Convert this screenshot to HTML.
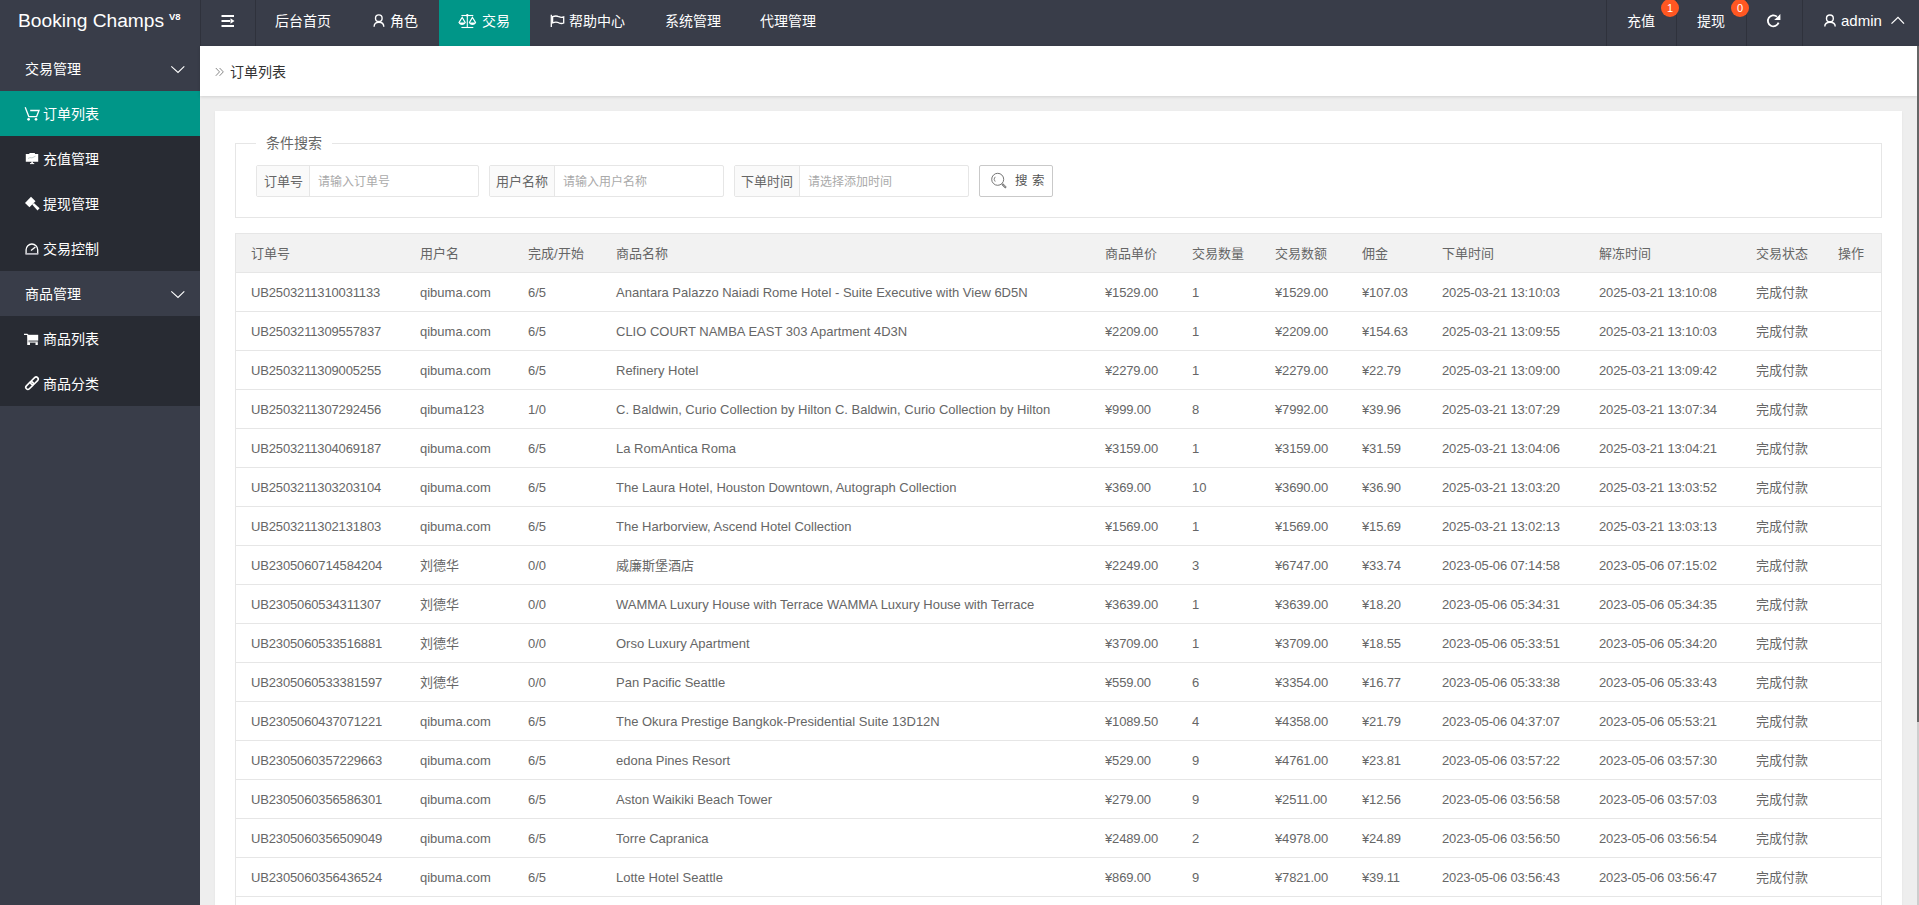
<!DOCTYPE html>
<html lang="zh-CN">
<head>
<meta charset="utf-8">
<title>订单列表</title>
<style>
*{margin:0;padding:0;box-sizing:border-box;}
html,body{width:1919px;height:905px;overflow:hidden;}
body{position:relative;background:#eeeeee;font-family:"Liberation Sans",sans-serif;color:#666;font-size:14px;}
.abs{position:absolute;}
/* header */
.header{position:absolute;left:0;top:0;width:1919px;height:46px;background:#393D49;}
.header .sep{position:absolute;top:0;width:1px;height:46px;background:#2f323c;}
.logo{position:absolute;left:18px;top:10px;color:#fff;font-size:19.2px;line-height:22px;white-space:nowrap;}
.logo sup{font-size:9.5px;position:absolute;left:151px;top:2px;line-height:10px;font-weight:bold;}
.nav{position:absolute;top:0;height:46px;line-height:42px;color:#fff;font-size:14px;white-space:nowrap;}
.nav.active{background:#009688;}
.badge{position:absolute;top:-1px;width:18px;height:18px;border-radius:9px;background:#FF5722;color:#fff;font-size:11px;line-height:18px;text-align:center;}
/* sidebar */
.side{position:absolute;left:0;top:46px;width:200px;height:859px;background:#393D49;}
.mi{position:absolute;left:0;width:200px;height:45px;line-height:45px;color:#fff;font-size:14px;white-space:nowrap;}
.mi.dd{background:#282B33;}
.mi.on{background:#009688;}
.mi .t{position:absolute;left:25px;top:1px;}
.mi .ico{position:absolute;}
/* breadcrumb */
.crumb{position:absolute;left:200px;top:46px;width:1717px;height:50px;background:#fff;box-shadow:0 1px 3px rgba(0,0,0,.12);}
.crumb .t{position:absolute;left:30px;top:15px;color:#333;font-size:14px;}
/* scrollbar */
.sbar{position:absolute;left:1917px;top:46px;width:2px;height:859px;background:#cdcdcd;}
.sthumb{position:absolute;left:1917px;top:46px;width:2px;height:676px;background:#666;}
/* card */
.card{position:absolute;left:215px;top:111px;width:1687px;height:794px;background:#fff;box-shadow:0 1px 2px 0 rgba(0,0,0,.06);}
.fs{position:absolute;left:235px;top:143px;width:1647px;height:75px;border:1px solid #e6e6e6;}
.legend{position:absolute;left:256px;top:133px;background:#fff;padding:0 10px;color:#666;font-size:14px;line-height:20px;}
.ig{position:absolute;top:165px;height:32px;border:1px solid #e6e6e6;border-radius:2px;background:#fff;}
.ig .lab{position:absolute;left:0;top:0;height:30px;background:#fafafa;border-right:1px solid #e6e6e6;color:#666;font-size:13px;line-height:32px;text-align:center;}
.ig .ph{position:absolute;top:0;line-height:32px;color:#aaa;font-size:12px;white-space:nowrap;}
.btn{position:absolute;left:979px;top:165px;width:74px;height:32px;border:1px solid #c9c9c9;border-radius:2px;background:#fff;color:#555;font-size:13px;line-height:30px;}
/* table */
.table{position:absolute;left:235px;top:233px;width:1647px;height:672px;border-left:1px solid #e6e6e6;border-right:1px solid #e6e6e6;border-top:1px solid #e6e6e6;overflow:hidden;}
.thead{position:absolute;left:0;top:0;width:100%;height:39px;background:#f2f2f2;border-bottom:1px solid #e6e6e6;}
.tr{position:absolute;left:0;width:100%;height:39px;border-bottom:1px solid #e6e6e6;background:#fff;}
.c{position:absolute;top:1px;line-height:38px;font-size:13px;color:#666;white-space:nowrap;}
.c.n{letter-spacing:-0.15px;}
</style>
</head>
<body>
<!-- header -->
<div class="header">
  <div class="logo">Booking Champs<sup>V8</sup></div>
  <div class="sep" style="left:200px"></div>
  <div class="sep" style="left:255px"></div>
  <svg class="abs" style="left:215px;top:8px" width="25" height="25" viewBox="0 0 25 25"><g fill="#fff"><rect x="6.5" y="7" width="12.5" height="2"/><rect x="6.5" y="12" width="8.5" height="2"/><rect x="6.5" y="17" width="12.5" height="2"/><path d="M15.5 10.2 L19.5 13 L15.5 15.8 Z"/></g></svg>
  <div class="nav" style="left:275px;">后台首页</div>
  <svg class="abs" style="left:365px;top:8px" width="25" height="25" viewBox="0 0 25 25"><g fill="none" stroke="#fff" stroke-width="1.4"><circle cx="13.8" cy="10.2" r="3.3"/><path d="M9.1 18.8 C9.1 15.6 11 14.2 13.9 14.2 C16.8 14.2 18.8 15.6 18.8 18.8"/></g></svg>
  <div class="nav" style="left:390px;">角色</div>
  <div class="nav active" style="left:439px;width:91px;"></div>
  <svg class="abs" style="left:452px;top:8px" width="30" height="25" viewBox="0 0 30 25"><g fill="none" stroke="#fff" stroke-width="1.1"><path d="M9.4 7.5 H21.3"/><path d="M15.3 7.5 V19.5"/><path d="M9.4 19.5 H21.3"/><path d="M6.8 14.9 L10.2 9.4 L13.4 14.9"/><path d="M17.2 14.9 L20.4 9.4 L23.8 14.9"/></g><circle cx="15.3" cy="7.2" r="1.2" fill="#fff"/><path d="M6.6 14.6 H13.6 C13.3 16.2 12 17 10.1 17 C8.2 17 6.9 16.2 6.6 14.6 Z" fill="#fff"/><path d="M17 14.6 H24 C23.7 16.2 22.4 17 20.5 17 C18.6 17 17.3 16.2 17 14.6 Z" fill="#fff"/></svg>
  <div class="nav" style="left:482px;">交易</div>
  <svg class="abs" style="left:543px;top:8px" width="25" height="25" viewBox="0 0 25 25"><g fill="none" stroke="#fff" stroke-width="1.3"><path d="M8.3 6.8 V19"/><path d="M9.6 8.7 C12 7.7 14.3 7.9 15.8 8.7 C17.4 9.5 19.4 9.5 20.7 8.9 V15 C19.4 15.6 17.4 15.6 15.8 14.8 C14.3 14 12 13.9 9.6 14.8 Z"/></g></svg>
  <div class="nav" style="left:569px;">帮助中心</div>
  <div class="nav" style="left:665px;">系统管理</div>
  <div class="nav" style="left:760px;">代理管理</div>

  <div class="sep" style="left:1606px"></div>
  <div class="sep" style="left:1676px"></div>
  <div class="sep" style="left:1746px"></div>
  <div class="sep" style="left:1802px"></div>
  <div class="nav" style="left:1627px;">充值</div>
  <div class="badge" style="left:1661px;">1</div>
  <div class="nav" style="left:1697px;">提现</div>
  <div class="badge" style="left:1731px;">0</div>
  <svg class="abs" style="left:1760px;top:8px" width="25" height="25" viewBox="0 0 25 25"><path d="M17 8.65 A5.5 5.5 0 1 0 18.58 14.65" fill="none" stroke="#fff" stroke-width="1.8"/><path d="M14.2 12 L20.4 6 V12 Z" fill="#fff"/></svg>
  <svg class="abs" style="left:1815px;top:8px" width="25" height="25" viewBox="0 0 25 25"><g fill="none" stroke="#fff" stroke-width="1.4"><circle cx="14.9" cy="10.4" r="3.4"/><path d="M9.8 18.6 C9.8 15.6 11.9 14.3 15 14.3 C18.1 14.3 20.2 15.6 20.2 18.6"/></g></svg>
  <div class="nav" style="left:1841px;font-size:15px;">admin</div>
  <svg class="abs" style="left:1885px;top:12px" width="25" height="16" viewBox="0 0 25 16"><path d="M6.5 11.6 L13 5.4 L19 11.6" fill="none" stroke="#fff" stroke-width="1.3"/></svg>
</div>

<!-- sidebar -->
<div class="side">
  <div class="mi" style="top:0;"><span class="t">交易管理</span></div>
  <div class="mi on" style="top:45px;"><span class="t" style="left:43px">订单列表</span></div>
  <div class="mi dd" style="top:90px;"><span class="t" style="left:43px">充值管理</span></div>
  <div class="mi dd" style="top:135px;"><span class="t" style="left:43px">提现管理</span></div>
  <div class="mi dd" style="top:180px;"><span class="t" style="left:43px">交易控制</span></div>
  <div class="mi" style="top:225px;"><span class="t">商品管理</span></div>
  <div class="mi dd" style="top:270px;"><span class="t" style="left:43px">商品列表</span></div>
  <div class="mi dd" style="top:315px;"><span class="t" style="left:43px">商品分类</span></div>
</div>
<!-- sidebar icons (page coords) -->
<svg class="abs" style="left:160px;top:55px" width="35" height="25" viewBox="0 0 35 25"><path d="M11.3 11.3 L18 17.4 L24.3 11.3" fill="none" stroke="#fff" stroke-width="1.1"/></svg>
<svg class="abs" style="left:160px;top:280px" width="35" height="25" viewBox="0 0 35 25"><path d="M11.3 11.3 L18 17.4 L24.3 11.3" fill="none" stroke="#fff" stroke-width="1.1"/></svg>
<svg class="abs" style="left:20px;top:100px" width="25" height="25" viewBox="0 0 25 25"><g fill="none" stroke="#fff" stroke-width="1.3"><path d="M5.2 7.2 L8.8 16.6 H16.6 L19 10.5 H10.2"/></g><circle cx="8.6" cy="19.3" r="1.35" fill="#fff"/><circle cx="16" cy="19.3" r="1.35" fill="#fff"/></svg>
<svg class="abs" style="left:20px;top:146px" width="25" height="25" viewBox="0 0 25 25"><g fill="#fff"><path d="M5.8 8 H9.4 V6.9 H14.9 V8 H18.2 V15.7 H5.8 Z"/><rect x="11.3" y="15.5" width="1.6" height="1.8"/><rect x="10" y="17.1" width="4.2" height="1"/></g><path d="M8 12.5 L10 11.6 L12 11.9 L15.5 10.2" fill="none" stroke="#9aa" stroke-width="0.6"/></svg>
<svg class="abs" style="left:20px;top:191px" width="25" height="25" viewBox="0 0 25 25"><g fill="#fff"><path d="M5 11.9 L11 5.8 L15.5 10.2 L9.4 16.3 Z"/><path d="M12.2 13.6 L13.9 11.9 L19.6 17.3 L17.5 19.4 Z"/></g></svg>
<svg class="abs" style="left:20px;top:236px" width="25" height="25" viewBox="0 0 25 25"><g fill="none" stroke="#fff" stroke-width="1.3"><path d="M6.1 17.7 V13.8 A5.8 5.8 0 0 1 17.7 13.8 V17.7"/><path d="M11 14.6 L15.4 11"/></g><rect x="5.4" y="17.1" width="12.9" height="1.6" fill="#c8c8d0"/></svg>
<svg class="abs" style="left:20px;top:326px" width="25" height="25" viewBox="0 0 25 25"><g fill="#fff"><path d="M4 7.7 H7.4 L8.4 8.8 V19 H7.4 L7.1 9 H4 Z"/><rect x="8" y="8.8" width="10.2" height="5.8"/><rect x="8" y="15.5" width="9.8" height="1.1"/><rect x="7.6" y="16.4" width="2.4" height="2.6"/><rect x="15.5" y="16.4" width="2.3" height="2.6"/></g></svg>
<svg class="abs" style="left:20px;top:371px" width="25" height="25" viewBox="0 0 25 25"><g fill="none" stroke="#fff" stroke-width="1.6"><rect x="5.1" y="12.5" width="9" height="4.2" rx="2.1" transform="rotate(-45 9.6 14.6)"/><rect x="9.9" y="7.7" width="9" height="4.2" rx="2.1" transform="rotate(-45 14.4 9.8)"/></g></svg>

<!-- breadcrumb -->
<div class="crumb">
  <svg class="abs" style="left:15px;top:21px" width="10" height="10" viewBox="0 0 10 10"><g fill="none" stroke="#888" stroke-width="1"><path d="M0.8 1 L4.5 4.9 L0.8 8.8"/><path d="M4.6 1 L8.3 4.9 L4.6 8.8"/></g></svg>
  <span class="t">订单列表</span>
</div>

<!-- card -->
<div class="card"></div>
<div class="fs"></div>
<div class="legend">条件搜索</div>

<div class="ig" style="left:256px;width:223px;"><div class="lab" style="width:53px">订单号</div><div class="ph" style="left:61px">请输入订单号</div></div>
<div class="ig" style="left:489px;width:235px;"><div class="lab" style="width:65px">用户名称</div><div class="ph" style="left:73px">请输入用户名称</div></div>
<div class="ig" style="left:734px;width:235px;"><div class="lab" style="width:65px">下单时间</div><div class="ph" style="left:73px">请选择添加时间</div></div>
<div class="btn">
  <svg class="abs" style="left:-1px;top:-1px" width="74" height="32" viewBox="979 165 74 32"><g fill="none" stroke="#666" stroke-width="0.9"><circle cx="997.7" cy="179.3" r="6"/><path d="M995.2 176.8 A3.5 3.5 0 0 0 995.2 181.6" stroke-width="0.8"/><path d="M1002.2 184 L1006 187.8" stroke-width="2"/></g><path d="M1002.8 184.4 L1005.8 187.4" stroke="#fff" stroke-width="0.6"/></svg>
  <span class="abs" style="left:35px;top:0;letter-spacing:4px;font-size:12.5px">搜索</span>
</div>

<div class="table">
<div class="thead"><span class="c" style="left:15px">订单号</span><span class="c" style="left:184px">用户名</span><span class="c" style="left:292px">完成/开始</span><span class="c" style="left:380px">商品名称</span><span class="c" style="left:869px">商品单价</span><span class="c" style="left:956px">交易数量</span><span class="c" style="left:1039px">交易数额</span><span class="c" style="left:1126px">佣金</span><span class="c" style="left:1206px">下单时间</span><span class="c" style="left:1363px">解冻时间</span><span class="c" style="left:1520px">交易状态</span><span class="c" style="left:1602px">操作</span></div>
<div class="tr" style="top:39px"><span class="c n" style="left:15px">UB2503211310031133</span><span class="c" style="left:184px">qibuma.com</span><span class="c" style="left:292px">6/5</span><span class="c" style="left:380px">Anantara Palazzo Naiadi Rome Hotel - Suite Executive with View 6D5N</span><span class="c n" style="left:869px">¥1529.00</span><span class="c" style="left:956px">1</span><span class="c n" style="left:1039px">¥1529.00</span><span class="c n" style="left:1126px">¥107.03</span><span class="c n" style="left:1206px">2025-03-21 13:10:03</span><span class="c n" style="left:1363px">2025-03-21 13:10:08</span><span class="c" style="left:1520px">完成付款</span></div>
<div class="tr" style="top:78px"><span class="c n" style="left:15px">UB2503211309557837</span><span class="c" style="left:184px">qibuma.com</span><span class="c" style="left:292px">6/5</span><span class="c" style="left:380px">CLIO COURT NAMBA EAST 303 Apartment 4D3N</span><span class="c n" style="left:869px">¥2209.00</span><span class="c" style="left:956px">1</span><span class="c n" style="left:1039px">¥2209.00</span><span class="c n" style="left:1126px">¥154.63</span><span class="c n" style="left:1206px">2025-03-21 13:09:55</span><span class="c n" style="left:1363px">2025-03-21 13:10:03</span><span class="c" style="left:1520px">完成付款</span></div>
<div class="tr" style="top:117px"><span class="c n" style="left:15px">UB2503211309005255</span><span class="c" style="left:184px">qibuma.com</span><span class="c" style="left:292px">6/5</span><span class="c" style="left:380px">Refinery Hotel</span><span class="c n" style="left:869px">¥2279.00</span><span class="c" style="left:956px">1</span><span class="c n" style="left:1039px">¥2279.00</span><span class="c n" style="left:1126px">¥22.79</span><span class="c n" style="left:1206px">2025-03-21 13:09:00</span><span class="c n" style="left:1363px">2025-03-21 13:09:42</span><span class="c" style="left:1520px">完成付款</span></div>
<div class="tr" style="top:156px"><span class="c n" style="left:15px">UB2503211307292456</span><span class="c" style="left:184px">qibuma123</span><span class="c" style="left:292px">1/0</span><span class="c" style="left:380px">C. Baldwin, Curio Collection by Hilton C. Baldwin, Curio Collection by Hilton</span><span class="c n" style="left:869px">¥999.00</span><span class="c" style="left:956px">8</span><span class="c n" style="left:1039px">¥7992.00</span><span class="c n" style="left:1126px">¥39.96</span><span class="c n" style="left:1206px">2025-03-21 13:07:29</span><span class="c n" style="left:1363px">2025-03-21 13:07:34</span><span class="c" style="left:1520px">完成付款</span></div>
<div class="tr" style="top:195px"><span class="c n" style="left:15px">UB2503211304069187</span><span class="c" style="left:184px">qibuma.com</span><span class="c" style="left:292px">6/5</span><span class="c" style="left:380px">La RomAntica Roma</span><span class="c n" style="left:869px">¥3159.00</span><span class="c" style="left:956px">1</span><span class="c n" style="left:1039px">¥3159.00</span><span class="c n" style="left:1126px">¥31.59</span><span class="c n" style="left:1206px">2025-03-21 13:04:06</span><span class="c n" style="left:1363px">2025-03-21 13:04:21</span><span class="c" style="left:1520px">完成付款</span></div>
<div class="tr" style="top:234px"><span class="c n" style="left:15px">UB2503211303203104</span><span class="c" style="left:184px">qibuma.com</span><span class="c" style="left:292px">6/5</span><span class="c" style="left:380px">The Laura Hotel, Houston Downtown, Autograph Collection</span><span class="c n" style="left:869px">¥369.00</span><span class="c" style="left:956px">10</span><span class="c n" style="left:1039px">¥3690.00</span><span class="c n" style="left:1126px">¥36.90</span><span class="c n" style="left:1206px">2025-03-21 13:03:20</span><span class="c n" style="left:1363px">2025-03-21 13:03:52</span><span class="c" style="left:1520px">完成付款</span></div>
<div class="tr" style="top:273px"><span class="c n" style="left:15px">UB2503211302131803</span><span class="c" style="left:184px">qibuma.com</span><span class="c" style="left:292px">6/5</span><span class="c" style="left:380px">The Harborview, Ascend Hotel Collection</span><span class="c n" style="left:869px">¥1569.00</span><span class="c" style="left:956px">1</span><span class="c n" style="left:1039px">¥1569.00</span><span class="c n" style="left:1126px">¥15.69</span><span class="c n" style="left:1206px">2025-03-21 13:02:13</span><span class="c n" style="left:1363px">2025-03-21 13:03:13</span><span class="c" style="left:1520px">完成付款</span></div>
<div class="tr" style="top:312px"><span class="c n" style="left:15px">UB2305060714584204</span><span class="c" style="left:184px">刘德华</span><span class="c" style="left:292px">0/0</span><span class="c" style="left:380px">威廉斯堡酒店</span><span class="c n" style="left:869px">¥2249.00</span><span class="c" style="left:956px">3</span><span class="c n" style="left:1039px">¥6747.00</span><span class="c n" style="left:1126px">¥33.74</span><span class="c n" style="left:1206px">2023-05-06 07:14:58</span><span class="c n" style="left:1363px">2023-05-06 07:15:02</span><span class="c" style="left:1520px">完成付款</span></div>
<div class="tr" style="top:351px"><span class="c n" style="left:15px">UB2305060534311307</span><span class="c" style="left:184px">刘德华</span><span class="c" style="left:292px">0/0</span><span class="c" style="left:380px">WAMMA Luxury House with Terrace WAMMA Luxury House with Terrace</span><span class="c n" style="left:869px">¥3639.00</span><span class="c" style="left:956px">1</span><span class="c n" style="left:1039px">¥3639.00</span><span class="c n" style="left:1126px">¥18.20</span><span class="c n" style="left:1206px">2023-05-06 05:34:31</span><span class="c n" style="left:1363px">2023-05-06 05:34:35</span><span class="c" style="left:1520px">完成付款</span></div>
<div class="tr" style="top:390px"><span class="c n" style="left:15px">UB2305060533516881</span><span class="c" style="left:184px">刘德华</span><span class="c" style="left:292px">0/0</span><span class="c" style="left:380px">Orso Luxury Apartment</span><span class="c n" style="left:869px">¥3709.00</span><span class="c" style="left:956px">1</span><span class="c n" style="left:1039px">¥3709.00</span><span class="c n" style="left:1126px">¥18.55</span><span class="c n" style="left:1206px">2023-05-06 05:33:51</span><span class="c n" style="left:1363px">2023-05-06 05:34:20</span><span class="c" style="left:1520px">完成付款</span></div>
<div class="tr" style="top:429px"><span class="c n" style="left:15px">UB2305060533381597</span><span class="c" style="left:184px">刘德华</span><span class="c" style="left:292px">0/0</span><span class="c" style="left:380px">Pan Pacific Seattle</span><span class="c n" style="left:869px">¥559.00</span><span class="c" style="left:956px">6</span><span class="c n" style="left:1039px">¥3354.00</span><span class="c n" style="left:1126px">¥16.77</span><span class="c n" style="left:1206px">2023-05-06 05:33:38</span><span class="c n" style="left:1363px">2023-05-06 05:33:43</span><span class="c" style="left:1520px">完成付款</span></div>
<div class="tr" style="top:468px"><span class="c n" style="left:15px">UB2305060437071221</span><span class="c" style="left:184px">qibuma.com</span><span class="c" style="left:292px">6/5</span><span class="c" style="left:380px">The Okura Prestige Bangkok-Presidential Suite 13D12N</span><span class="c n" style="left:869px">¥1089.50</span><span class="c" style="left:956px">4</span><span class="c n" style="left:1039px">¥4358.00</span><span class="c n" style="left:1126px">¥21.79</span><span class="c n" style="left:1206px">2023-05-06 04:37:07</span><span class="c n" style="left:1363px">2023-05-06 05:53:21</span><span class="c" style="left:1520px">完成付款</span></div>
<div class="tr" style="top:507px"><span class="c n" style="left:15px">UB2305060357229663</span><span class="c" style="left:184px">qibuma.com</span><span class="c" style="left:292px">6/5</span><span class="c" style="left:380px">edona Pines Resort</span><span class="c n" style="left:869px">¥529.00</span><span class="c" style="left:956px">9</span><span class="c n" style="left:1039px">¥4761.00</span><span class="c n" style="left:1126px">¥23.81</span><span class="c n" style="left:1206px">2023-05-06 03:57:22</span><span class="c n" style="left:1363px">2023-05-06 03:57:30</span><span class="c" style="left:1520px">完成付款</span></div>
<div class="tr" style="top:546px"><span class="c n" style="left:15px">UB2305060356586301</span><span class="c" style="left:184px">qibuma.com</span><span class="c" style="left:292px">6/5</span><span class="c" style="left:380px">Aston Waikiki Beach Tower</span><span class="c n" style="left:869px">¥279.00</span><span class="c" style="left:956px">9</span><span class="c n" style="left:1039px">¥2511.00</span><span class="c n" style="left:1126px">¥12.56</span><span class="c n" style="left:1206px">2023-05-06 03:56:58</span><span class="c n" style="left:1363px">2023-05-06 03:57:03</span><span class="c" style="left:1520px">完成付款</span></div>
<div class="tr" style="top:585px"><span class="c n" style="left:15px">UB2305060356509049</span><span class="c" style="left:184px">qibuma.com</span><span class="c" style="left:292px">6/5</span><span class="c" style="left:380px">Torre Capranica</span><span class="c n" style="left:869px">¥2489.00</span><span class="c" style="left:956px">2</span><span class="c n" style="left:1039px">¥4978.00</span><span class="c n" style="left:1126px">¥24.89</span><span class="c n" style="left:1206px">2023-05-06 03:56:50</span><span class="c n" style="left:1363px">2023-05-06 03:56:54</span><span class="c" style="left:1520px">完成付款</span></div>
<div class="tr" style="top:624px"><span class="c n" style="left:15px">UB2305060356436524</span><span class="c" style="left:184px">qibuma.com</span><span class="c" style="left:292px">6/5</span><span class="c" style="left:380px">Lotte Hotel Seattle</span><span class="c n" style="left:869px">¥869.00</span><span class="c" style="left:956px">9</span><span class="c n" style="left:1039px">¥7821.00</span><span class="c n" style="left:1126px">¥39.11</span><span class="c n" style="left:1206px">2023-05-06 03:56:43</span><span class="c n" style="left:1363px">2023-05-06 03:56:47</span><span class="c" style="left:1520px">完成付款</span></div>
</div>

<div class="sbar"></div>
<div class="sthumb"></div>
</body>
</html>
